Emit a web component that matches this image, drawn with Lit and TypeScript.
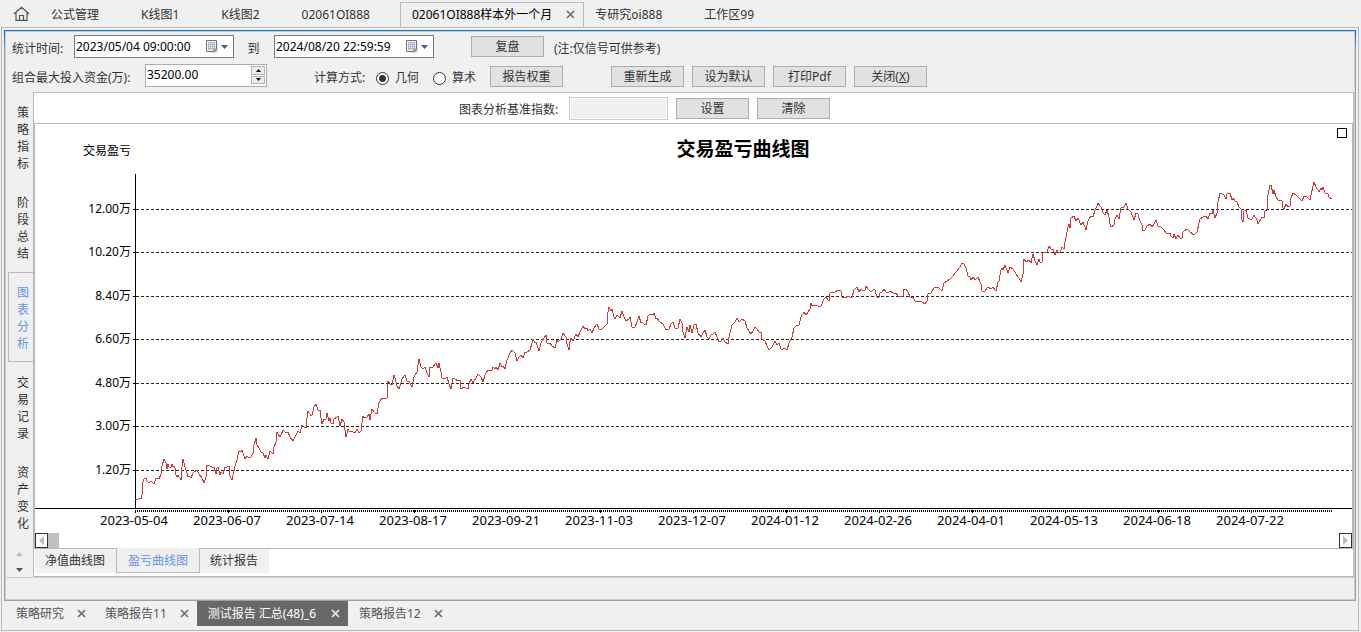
import { LitElement, html, css, svg } from "lit";
import { customElement, property, state } from "lit/decorators.js";

interface WorkTab {
  label: string;
  closable?: boolean;
}

const WORK_TABS: WorkTab[] = [
  { label: "公式管理" },
  { label: "K线图1" },
  { label: "K线图2" },
  { label: "02061OI888" },
  { label: "02061OI888样本外一个月", closable: true },
  { label: "专研究oi888" },
  { label: "工作区99" },
];

const SIDE_TABS = ["策略指标", "阶段总结", "图表分析", "交易记录", "资产变化"];
const CHART_TABS = ["净值曲线图", "盈亏曲线图", "统计报告"];
const REPORT_TABS = ["策略研究", "策略报告11", "测试报告 汇总(48)_6", "策略报告12"];

const Y_TICKS = [
  { y: 209, label: "12.00万" },
  { y: 252, label: "10.20万" },
  { y: 296, label: "8.40万" },
  { y: 339, label: "6.60万" },
  { y: 383, label: "4.80万" },
  { y: 426, label: "3.00万" },
  { y: 470, label: "1.20万" },
];

const X_TICKS = [
  "2023-05-04", "2023-06-07", "2023-07-14", "2023-08-17", "2023-09-21",
  "2023-11-03", "2023-12-07", "2024-01-12", "2024-02-26", "2024-04-01",
  "2024-05-13", "2024-06-18", "2024-07-22",
];

const CURVE = `135,499 138,499 139,498 141,499 142,495 143,482 144,479 146,478 147,481 149,483 151,481 152,482 154,484
156,478 157,479 158,478 159,479 161,474 162,466 164,459 166,463 167,469 168,464 169,467 171,467 172,464 173,467
174,466 175,468 176,475 177,477 178,475 181,480 182,467 183,459 185,467 187,473 188,477 189,476 191,478 193,473
197,470 199,474 202,478 204,483 206,477 207,465 210,466 212,467 214,467 216,474 217,468 218,467 220,475 221,472
223,474 225,467 227,467 229,466 230,476 232,480 233,475 235,466 237,460 239,451 241,452 242,450 244,456 245,459
247,456 249,458 251,457 253,453 254,445 256,438 257,445 259,448 261,452 263,453 265,458 266,455 268,459 270,451
273,454 274,447 276,442 277,432 278,434 280,437 281,435 283,430 285,432 288,432 290,437 293,441 296,435 298,431
300,433 302,425 304,427 306,428 307,418 308,411 311,416 312,415 314,407 316,404 318,410 320,410 321,418 322,424
324,419 326,419 327,413 329,421 330,418 331,423 333,424 334,419 337,417 338,416 340,426 342,419 344,422 346,437
348,429 349,431 353,432 355,433 357,429 359,433 361,431 363,416 364,418 367,417 369,414 370,420 372,409 375,413
377,414 379,403 382,398 385,399 387,398 388,381 390,384 392,385 394,375 395,378 397,386 399,389 401,383 402,379
405,375 407,381 409,381 412,387 414,377 417,372 419,359 421,367 423,369 425,367 427,373 429,377 430,367 433,367
436,363 438,368 439,363 441,372 442,378 445,379 447,377 449,384 451,389 453,378 455,379 458,381 460,380 461,389
464,387 466,388 468,389 469,384 471,379 473,383 476,378 478,374 481,377 483,382 485,375 488,370 492,370 493,367
495,369 496,367 498,370 500,363 502,367 503,366 505,369 507,360 510,353 512,350 515,353 517,361 519,357 521,355
523,358 525,352 527,352 530,350 532,343 533,339 535,343 536,342 539,351 541,343 544,338 546,335 547,343 550,343
552,346 555,348 557,340 558,342 561,339 563,333 566,337 567,344 569,350 570,342 571,338 573,341 576,334 578,337
580,332 583,326 585,329 587,328 588,331 590,329 592,333 594,328 597,324 599,329 602,329 604,327 607,324 608,312
609,307 611,311 612,309 614,317 615,319 617,315 620,318 622,311 624,317 626,321 629,319 630,317 632,327 635,327
637,322 639,316 641,323 642,322 644,324 646,325 648,316 650,314 653,315 654,313 656,319 657,318 660,322 663,324
666,330 669,329 671,324 673,322 675,328 678,328 680,319 682,323 683,332 685,338 687,327 689,332 690,325 692,333
694,325 696,324 698,333 701,337 703,333 705,330 707,337 709,339 711,335 713,334 715,332 717,337 719,342 721,341
723,338 725,342 728,344 729,337 732,325 735,322 737,318 739,322 742,319 745,321 747,328 751,334 753,331 755,327
757,329 759,332 761,332 762,339 765,341 767,346 769,350 772,347 775,341 777,345 779,343 781,349 783,349 785,348
787,350 789,343 792,337 794,328 796,326 799,325 801,317 804,312 806,315 810,309 811,303 812,306 815,305 818,306
821,306 824,299 826,297 829,301 830,293 832,292 835,292 838,290 841,291 842,297 845,298 848,296 850,297 852,297
854,290 857,287 859,292 861,289 863,291 865,290 866,286 869,290 871,292 874,289 875,290 877,297 879,297 880,293
882,292 884,289 886,292 888,293 890,291 893,293 896,293 898,296 901,297 903,296 904,289 906,289 908,292 910,297
913,297 915,301 918,302 921,301 925,304 927,301 928,294 931,293 934,288 936,287 939,288 942,291 944,283 947,281
950,279 953,276 956,272 960,267 962,263 964,264 966,268 968,276 970,277 971,280 973,277 975,280 978,277 980,282
981,284 982,291 985,291 988,287 991,289 993,287 996,291 998,282 999,281 1001,270 1002,268 1003,270 1005,265
1008,273 1010,267 1013,269 1016,274 1019,278 1021,282 1023,274 1024,259 1026,262 1029,260 1031,263 1033,254
1035,261 1037,265 1039,259 1040,262 1042,262 1043,253 1047,252 1049,246 1051,249 1053,249 1055,255 1057,250
1058,252 1060,253 1062,247 1064,249 1065,242 1068,227 1069,224 1070,228 1071,218 1074,216 1076,221 1078,218
1081,225 1083,222 1086,230 1088,221 1091,216 1093,217 1095,210 1097,206 1098,203 1101,207 1103,213 1105,215
1107,210 1109,217 1110,224 1111,227 1114,225 1115,219 1117,215 1119,219 1121,208 1124,207 1126,203 1128,209
1131,212 1134,220 1136,213 1138,214 1140,221 1142,225 1143,231 1145,230 1147,226 1150,224 1152,227 1154,224
1156,220 1158,226 1161,227 1164,230 1166,233 1168,234 1170,233 1171,236 1173,238 1174,234 1176,239 1178,235
1180,238 1182,238 1183,232 1187,229 1190,232 1194,235 1197,232 1199,223 1200,219 1203,217 1206,216 1208,219
1210,213 1212,214 1213,210 1214,214 1215,218 1217,213 1218,202 1220,193 1222,194 1224,195 1226,199 1227,194
1230,193 1232,200 1233,198 1235,201 1237,202 1239,207 1241,209 1242,220 1243,222 1244,211 1246,210 1248,218
1250,219 1252,219 1254,215 1257,220 1258,224 1261,219 1262,217 1264,218 1265,211 1267,210 1268,195 1270,185
1271,185 1273,194 1274,190 1276,197 1278,200 1282,201 1283,208 1284,209 1286,204 1288,207 1290,206 1291,198
1293,193 1296,195 1299,198 1302,201 1304,196 1306,196 1310,200 1311,195 1313,186 1314,182 1316,187 1319,192
1321,188 1322,190 1323,187 1325,193 1328,194 1329,197 1332,199`;

const closeIcon = html`<svg width="9" height="9" viewBox="0 0 9 9" aria-hidden="true">
  <path d="M1 1L8 8M8 1L1 8" stroke="currentColor" stroke-width="1.7" fill="none" />
</svg>`;

const shared = css`
  * {
    box-sizing: border-box;
  }
  button,
  input {
    font: inherit;
    color: inherit;
    margin: 0;
    padding: 0;
    border: 0;
    border-radius: 0;
    background: none;
  }
  svg {
    display: block;
  }
`;

@customElement("profit-chart")
export class ProfitChart extends LitElement {
  static styles = [
    shared,
    css`
      :host {
        display: flex;
        flex-direction: column;
        flex: 1;
        min-height: 0;
        background: #fff;
      }
      .plot {
        flex: 1;
        min-height: 0;
        width: 100%;
      }
      .title {
        font-size: 19px;
        font-weight: 700;
      }
      .tick {
        font-size: 12px;
      }
      .date {
        font-size: 13px;
      }
      .scroll {
        display: flex;
        height: 16px;
        padding-top: 1px;
      }
      .arrow {
        display: grid;
        place-items: center;
        width: 13px;
        border: 1px solid #333;
        background: #fff;
      }
      .thumb {
        width: 11px;
        background: #c0c0c0;
      }
      .track {
        flex: 1;
      }
    `,
  ];

  render() {
    return html`
      <svg class="plot" viewBox="35 124 1317 408" role="img" aria-label="交易盈亏曲线图">
        <text class="title" x="743" y="156" text-anchor="middle">交易盈亏曲线图</text>
        <text class="tick" x="131" y="155" text-anchor="end">交易盈亏</text>
        <rect x="1337.5" y="128.5" width="9" height="9" fill="none" stroke="#000" />
        <g shape-rendering="crispEdges" fill="none" stroke="#000">
          ${Y_TICKS.map(
            (t) => svg`<path d="M133 ${t.y + 0.5}H136" /><path d="M136 ${t.y + 0.5}H1352" stroke="#222" stroke-dasharray="3 2" />`
          )}
          <path d="M135.5 174V508M35 508.5H1352" />
          <path d="M135 511H1332" stroke-width="2" stroke-dasharray="1 1" />
          ${X_TICKS.map((_, i) => svg`<path d="M${135.5 + i * 93} 510V513" />`)}
          <polyline points=${CURVE} stroke="#c83c3c" />
        </g>
        ${Y_TICKS.map(
          (t) => svg`<text class="tick" x="131" y=${t.y + 4} text-anchor="end">${t.label}</text>`
        )}
        ${X_TICKS.map(
          (d, i) => svg`<text class="date" x=${134 + i * 93} y="525" text-anchor="middle">${d}</text>`
        )}
      </svg>
      <div class="scroll">
        <button class="arrow" aria-label="向左滚动">
          <svg width="5" height="9" viewBox="0 0 5 9"><path d="M5 0V9L0 4.5Z" fill="#bbb" /></svg>
        </button>
        <div class="thumb"></div>
        <div class="track"></div>
        <button class="arrow" aria-label="向右滚动">
          <svg width="5" height="9" viewBox="0 0 5 9"><path d="M0 0V9L5 4.5Z" fill="#bbb" /></svg>
        </button>
      </div>
    `;
  }
}

@customElement("date-field")
export class DateField extends LitElement {
  @property() value = "";
  @property() name = "";

  static styles = [
    shared,
    css`
      :host {
        display: flex;
        align-items: center;
        width: 160px;
        height: 23px;
        border: 1px solid #7a7a7a;
        background: #fff;
        color: #000;
      }
      .text {
        flex: 1;
        min-width: 0;
        height: 21px;
        padding: 0 0 0 1px;
        outline: 0;
      }
      .drop {
        display: flex;
        align-items: center;
        gap: 3px;
        padding-right: 5px;
      }
    `,
  ];

  render() {
    return html`
      <input class="text" type="text" aria-label=${this.name} .value=${this.value} />
      <button class="drop" aria-label="选择日期">
        <svg width="12" height="13" viewBox="0 0 12 13">
          <path d="M2.5 3.5H11.5V12.5H3.5Z" fill="#b9a9a4" opacity=".6" />
          <path d="M.5 .5H10.5V9.5L8.5 11.5H.5Z" fill="#eef2f8" stroke="#74707c" />
          <path d="M2.5 2V10M4.5 2V10M6.5 2V10M8.5 2V8M2 2.5H9M2 4.5H9M2 6.5H9M2 8.5H8" stroke="#a3b0c8" stroke-width=".8" />
          <path d="M8 11.5V9H10.5" fill="none" stroke="#74707c" />
        </svg>
        <svg width="7" height="4" viewBox="0 0 7 4"><path d="M0 0H7L3.5 4Z" fill="#3f5b8c" /></svg>
      </button>
    `;
  }
}

@customElement("app-root")
export class AppRoot extends LitElement {
  @state() private workTab = 4;
  @state() private sideTab = 2;
  @state() private chartTab = 1;
  @state() private reportTab = 2;

  static styles = [
    shared,
    css`
      :host {
        display: flex;
        flex-direction: column;
        height: 100vh;
        min-height: 632px;
        background: #f0f0f0;
        color: #333;
        font: 12px/16px "Noto Sans", "Noto Sans CJK SC", sans-serif;
      }
      .worktabs {
        display: flex;
        height: 28px;
        padding-left: 13px;
        margin-bottom: -1px;
      }
      .home {
        width: 26px;
      }
      .worktab {
        display: flex;
        align-items: center;
        gap: 14px;
        padding: 2px 30px 0 12px;
        white-space: nowrap;
      }
      .worktab.active {
        margin-top: 2px;
        padding: 0 8px 2px 11px;
        border: 1px solid #b9b9b9;
        border-bottom: 0;
        background: #f0f0f0;
        color: #000;
      }
      .worktab.active + .worktab {
        padding-left: 11px;
      }
      .close {
        color: #707070;
      }
      .outer {
        flex: 1;
        min-height: 0;
        display: flex;
        flex-direction: column;
        margin: 0 2px 1px 1px;
        padding: 2px 2px 0;
        border: 1px solid #b9b9b9;
      }
      .frame {
        flex: 1;
        min-height: 0;
        display: flex;
        padding: 1px;
        background: linear-gradient(#0173c7 2px, #a0a0a0 22px);
      }
      .inner {
        flex: 1;
        min-width: 0;
        display: flex;
        flex-direction: column;
        border: 1px solid #cdcdcd;
        background: #f0f0f0;
      }
      .toolbar {
        display: flex;
        flex-direction: column;
        gap: 6px;
        padding: 3px 6px 5px;
      }
      .row {
        display: flex;
        align-items: center;
        height: 23px;
        white-space: nowrap;
      }
      .caption {
        padding-top: 5px;
      }
      .w-short {
        width: 62px;
      }
      .w-long {
        width: 133px;
      }
      .to {
        width: 40px;
        padding-right: 1px;
        text-align: center;
      }
      .btn {
        width: 73px;
        height: 21px;
        border: 1px solid #adadad;
        background: #e1e1e1;
        text-align: center;
        line-height: 19px;
      }
      .low {
        align-self: flex-end;
      }
      .replay {
        margin: 0 10px 0 37px;
      }
      .group {
        display: flex;
        gap: 8px;
        margin-left: 48px;
      }
      .spin {
        display: flex;
        width: 122px;
        height: 23px;
        margin-right: 47px;
        border: 1px solid #abadb3;
        background: #fff;
        color: #000;
      }
      .spin-text {
        flex: 1;
        min-width: 0;
        padding: 0 0 2px 1px;
        outline: 0;
      }
      .spin-btns {
        display: grid;
        grid-template-rows: 1fr 1fr;
        gap: 1px;
        width: 16px;
        padding: 1px 1px 2px;
      }
      .spin-btn {
        display: grid;
        place-items: center;
        border: 1px solid #b4b4b4;
        background: #ececec;
      }
      .radio {
        display: flex;
        align-items: center;
        gap: 6px;
        width: 57px;
        padding-top: 5px;
      }
      .dot {
        appearance: none;
        width: 13px;
        height: 13px;
        border: 1px solid #333;
        border-radius: 50%;
        background: #fff;
      }
      .dot:checked {
        background: radial-gradient(circle, #333 3px, #fff 4px);
      }
      .body {
        flex: 1;
        min-height: 0;
        display: flex;
      }
      .side {
        display: flex;
        flex-direction: column;
        width: 27px;
        padding-left: 2px;
      }
      .sidetab {
        display: flex;
        flex: none;
        height: 90px;
        padding: 12px 0 0 9px;
        line-height: 17px;
      }
      .sidetab span {
        width: 12px;
        word-break: break-all;
      }
      .sidetab.active {
        padding: 11px 0 0 8px;
        border: 1px solid #b9b9b9;
        border-right: 0;
        color: #6495ed;
      }
      .side-arrows {
        display: flex;
        flex-direction: column;
        align-items: flex-start;
        gap: 12px;
        padding: 10px 8px 0;
      }
      .panel {
        flex: 1;
        min-width: 0;
        display: flex;
        flex-direction: column;
        border: 1px solid #b9b9b9;
        background: #fff;
      }
      .index {
        display: flex;
        align-items: center;
        height: 30px;
        padding-left: 425px;
        white-space: nowrap;
      }
      .index .caption {
        width: 110px;
        padding-top: 3px;
      }
      .index .btn {
        margin-left: 8px;
      }
      .index-input {
        width: 99px;
        height: 23px;
        border: 1px solid #ccc;
        background: #f0f0f0;
        box-shadow: inset 0 0 0 1px #fff;
      }
      .chart {
        flex: 1;
        min-height: 0;
        display: flex;
        border: 1px solid #b9b9b9;
        border-bottom: 0;
      }
      .charttabs {
        display: flex;
        height: 28px;
        padding: 0 0 3px 1px;
        background: linear-gradient(#b9b9b9 1px, #fff 1px);
      }
      .charttab {
        margin-top: 1px;
        padding: 0 11px 0 10px;
        background: #f0f0f0;
      }
      .charttab.active {
        margin-top: 0;
        border: 1px solid #b9b9b9;
        border-top: 0;
        padding: 2px 11px 0;
        color: #6495ed;
      }
      .status {
        height: 22px;
        border-top: 1px solid #cdcdcd;
      }
      .reports {
        display: flex;
        height: 29px;
        padding: 0 0 4px 1px;
      }
      .report {
        display: flex;
        align-items: center;
        gap: 13px;
        padding: 0 8px 0 11px;
        color: #555;
        white-space: nowrap;
      }
      .report.active {
        gap: 15px;
        background: #686868;
        color: #fff;
      }
      .report.active .close {
        color: #eee;
      }
    `,
  ];

  private renderWorkTab(tab: WorkTab, i: number) {
    return html`<div class="worktab ${i === this.workTab ? "active" : ""}">
      <button @click=${() => (this.workTab = i)}>${tab.label}</button>
      ${tab.closable ? html`<button class="close" aria-label="关闭标签">${closeIcon}</button>` : null}
    </div>`;
  }

  render() {
    return html`
      <nav class="worktabs">
        <button class="home" aria-label="主页">
          <svg width="17" height="16" viewBox="0 0 17 16" fill="none" stroke="#555" stroke-width="1.2">
            <path d="M.8 8L8.5 1.2L16.2 8M3 6.5V14.4H14V6.5M6.5 14.4V9.5H10.5V14.4" />
          </svg>
        </button>
        ${WORK_TABS.map((t, i) => this.renderWorkTab(t, i))}
      </nav>
      <main class="outer">
        <div class="frame">
          <div class="inner">
            <div class="toolbar">
              <div class="row">
                <span class="caption w-short">统计时间:</span>
                <date-field name="开始时间" value="2023/05/04 09:00:00"></date-field>
                <span class="caption to">到</span>
                <date-field name="结束时间" value="2024/08/20 22:59:59"></date-field>
                <button class="btn replay">复盘</button>
                <span class="caption">(注:仅信号可供参考)</span>
              </div>
              <div class="row">
                <label class="caption w-long" for="fund">组合最大投入资金(万):</label>
                <div class="spin">
                  <input class="spin-text" id="fund" type="text" value="35200.00" />
                  <div class="spin-btns">
                    <button class="spin-btn" aria-label="增加">
                      <svg width="5" height="3" viewBox="0 0 5 3"><path d="M0 3H5L2.5 0Z" /></svg>
                    </button>
                    <button class="spin-btn" aria-label="减少">
                      <svg width="5" height="3" viewBox="0 0 5 3"><path d="M0 0H5L2.5 3Z" /></svg>
                    </button>
                  </div>
                </div>
                <span class="caption w-short">计算方式:</span>
                <label class="radio"><input class="dot" type="radio" name="mode" checked />几何</label>
                <label class="radio"><input class="dot" type="radio" name="mode" />算术</label>
                <button class="btn low">报告权重</button>
                <div class="group low">
                  <button class="btn">重新生成</button>
                  <button class="btn">设为默认</button>
                  <button class="btn">打印Pdf</button>
                  <button class="btn">关闭(<u>X</u>)</button>
                </div>
              </div>
            </div>
            <div class="body">
              <nav class="side">
                ${SIDE_TABS.map(
                  (t, i) => html`<button
                    class="sidetab ${i === this.sideTab ? "active" : ""}"
                    @click=${() => (this.sideTab = i)}
                  ><span>${t}</span></button>`
                )}
                <div class="side-arrows">
                  <svg width="7" height="4" viewBox="0 0 7 4"><path d="M0 4H7L3.5 0Z" fill="#bbb" /></svg>
                  <svg width="7" height="4" viewBox="0 0 7 4"><path d="M0 0H7L3.5 4Z" fill="#555" /></svg>
                </div>
              </nav>
              <section class="panel">
                <div class="index">
                  <label class="caption" for="base">图表分析基准指数:</label>
                  <input class="index-input" id="base" type="text" />
                  <button class="btn">设置</button>
                  <button class="btn">清除</button>
                </div>
                <div class="chart"><profit-chart></profit-chart></div>
                <div class="charttabs">
                  ${CHART_TABS.map(
                    (t, i) => html`<button
                      class="charttab ${i === this.chartTab ? "active" : ""}"
                      @click=${() => (this.chartTab = i)}
                    >${t}</button>`
                  )}
                </div>
              </section>
            </div>
            <div class="status"></div>
          </div>
        </div>
        <nav class="reports">
          ${REPORT_TABS.map(
            (t, i) => html`<div class="report ${i === this.reportTab ? "active" : ""}">
              <button @click=${() => (this.reportTab = i)}>${t}</button>
              <button class="close" aria-label="关闭报告">${closeIcon}</button>
            </div>`
          )}
        </nav>
      </main>
    `;
  }
}
